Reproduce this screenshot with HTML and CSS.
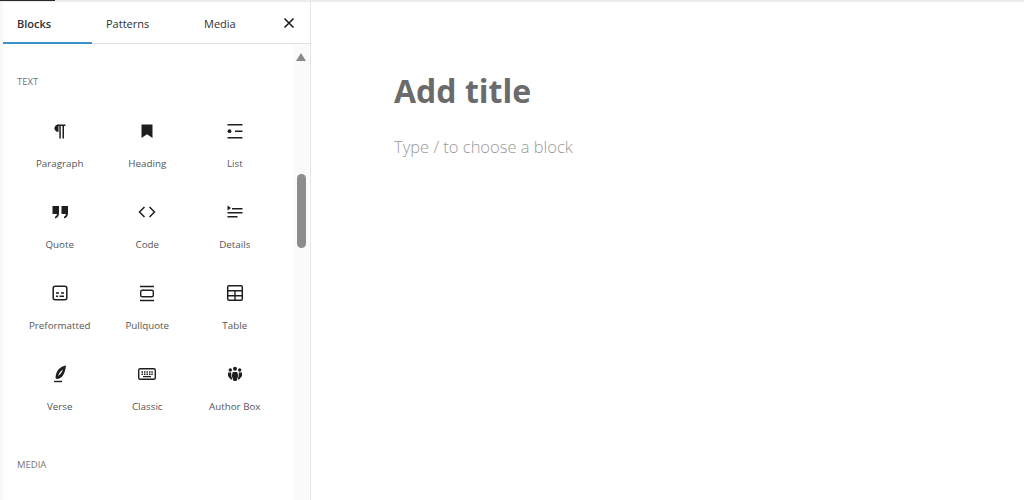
FILE: index.html
```html
<!DOCTYPE html>
<html lang="en">
<head>
  <meta charset="UTF-8">
  <title>Add title</title>
  <link rel="stylesheet" href="styles.css">
</head>
<body>
  <!-- Top bar edge -->
  <div class="top-edge"><div class="top-mark"></div></div>

  <div class="editor">
    <!-- Block inserter -->
    <aside class="inserter">
      <div class="tabs">
        <div class="tab active">Blocks</div>
        <div class="tab">Patterns</div>
        <div class="tab">Media</div>
        <button class="close-btn" aria-label="Close">
          <svg width="12" height="12" viewBox="0 0 12 12"><path d="M1.5 1.5l9 9M10.5 1.5l-9 9" stroke="#1e1e1e" stroke-width="1.6" fill="none"/></svg>
        </button>
      </div>
      <div class="inserter-body">
        <div class="block-list">
          <h2 class="group-title">Text</h2>
          <div class="block-grid">
            <div class="block-item">
              <svg class="block-icon" viewBox="0 0 24 24"><path d="M6.500 9.200C6.500 6.900 8.300 5.500 10.500 5.500v7.400C8.300 12.900 6.500 11.500 6.500 9.200z" fill="#1e1e1e"/><path d="M9.500 5.500H17.500V7H16v12.500h-1.500V7h-1.700v12.500h-1.500V7H9.500z" fill="#1e1e1e"/></svg>
              <span class="block-label">Paragraph</span>
            </div>
            <div class="block-item">
              <svg class="block-icon" viewBox="0 0 24 24"><path d="M6.500 5.500h11v13.500L12 15.200 6.500 19z" fill="#1e1e1e"/></svg>
              <span class="block-label">Heading</span>
            </div>
            <div class="block-item">
              <svg class="block-icon" viewBox="0 0 24 24"><path d="M4.500 5h15v1.400h-15zM12 11.500h7.500v1.400H12zM4.500 18h15v1.400h-15z" fill="#1e1e1e"/><circle cx="6.500" cy="12.200" r="1.900" fill="#1e1e1e"/></svg>
              <span class="block-label">List</span>
            </div>
            <div class="block-item">
              <svg class="block-icon" viewBox="0 0 24 24"><path d="M4.500 6h6.500v7c0 3-1.500 5-4 5.500v-1.800c1.200-.4 1.800-1.400 1.900-2.700H4.500zM13.500 6H20v7c0 3-1.500 5-4 5.500v-1.800c1.200-.4 1.800-1.400 1.900-2.700h-4.400z" fill="#1e1e1e"/></svg>
              <span class="block-label">Quote</span>
            </div>
            <div class="block-item">
              <svg class="block-icon" viewBox="0 0 24 24"><path d="M9.500 7L4.500 12l5 5M14.500 7l5 5-5 5" stroke="#1e1e1e" stroke-width="1.500" fill="none"/></svg>
              <span class="block-label">Code</span>
            </div>
            <div class="block-item">
              <svg class="block-icon" viewBox="0 0 24 24"><path d="M4.500 5.500l3.500 2.500-3.500 2.500z" fill="#1e1e1e"/><path d="M9 8h10.500v1.400H9zM4.500 12h15v1.400h-15zM4.500 16h10v1.400h-10z" fill="#1e1e1e"/></svg>
              <span class="block-label">Details</span>
            </div>
            <div class="block-item">
              <svg class="block-icon" viewBox="0 0 24 24"><rect x="5.200" y="5.200" width="13.600" height="13.600" rx="2" stroke="#1e1e1e" stroke-width="1.500" fill="none"/><path d="M8 11.300h3v1.400H8zM13 11.300h3v1.400h-3zM8 14.500h2v1.400H8zM11.500 14.500H16v1.400h-4.500z" fill="#1e1e1e"/></svg>
              <span class="block-label">Preformatted</span>
            </div>
            <div class="block-item">
              <svg class="block-icon" viewBox="0 0 24 24"><path d="M5 4.800h14v1.400H5zM5 18.800h14v1.400H5z" fill="#1e1e1e"/><rect x="5.700" y="9.200" width="12.600" height="6.600" rx="1.500" stroke="#1e1e1e" stroke-width="1.400" fill="none"/></svg>
              <span class="block-label">Pullquote</span>
            </div>
            <div class="block-item">
              <svg class="block-icon" viewBox="0 0 24 24"><rect x="4.700" y="4.700" width="14.600" height="14.600" rx="1.500" stroke="#1e1e1e" stroke-width="1.500" fill="none"/><path d="M4.700 9h14.600v1.400H4.700zM4.700 14h14.600v1.400H4.700zM11.300 9.500h1.400v9.500h-1.400z" fill="#1e1e1e"/></svg>
              <span class="block-label">Table</span>
            </div>
            <div class="block-item">
              <svg class="block-icon" viewBox="0 0 24 24"><path d="M18 3.500C12 4.500 8 8.500 7.500 16l1.200 1c5.300-.5 8.300-4.500 9.300-13.500zM10 14c1-3 2.800-5.200 5-6.500-1 2.800-2.800 5-5 6.500z" fill="#1e1e1e" fill-rule="evenodd"/><path d="M6 18.800h8v1.400H6z" fill="#1e1e1e"/></svg>
              <span class="block-label">Verse</span>
            </div>
            <div class="block-item">
              <svg class="block-icon" viewBox="0 0 24 24"><rect x="3.700" y="6.700" width="16.600" height="10.600" rx="1.500" stroke="#1e1e1e" stroke-width="1.400" fill="none"/><path d="M6.500 9.300h1.500v1.400H6.500zM9 9.300h1.500v1.400H9zM11.500 9.300H13v1.400h-1.500zM14 9.300h1.500v1.400H14zM16.300 9.300h1.500v1.400h-1.500zM6.500 11.600h1.500V13H6.500zM9 11.600h1.500V13H9zM11.500 11.600H13V13h-1.500zM14 11.600h1.500V13H14zM16.300 11.600h1.500V13h-1.500zM8 14h8v1.300H8z" fill="#1e1e1e"/></svg>
              <span class="block-label">Classic</span>
            </div>
            <div class="block-item">
              <svg class="block-icon" viewBox="0 0 24 24"><circle cx="12" cy="6.800" r="2" fill="#1e1e1e"/><circle cx="7.300" cy="8" r="1.700" fill="#1e1e1e"/><circle cx="16.700" cy="8" r="1.700" fill="#1e1e1e"/><path d="M9.800 10h4.400l1 3.800-1.700 5.200h-3l-1.700-5.200z" fill="#1e1e1e"/><path d="M5 10.500h3.200l.1 3.500 1 3.500H7.800L5 14zM19 10.500h-3.200l-.1 3.500-1 3.500h1.500L19 14z" fill="#1e1e1e"/></svg>
              <span class="block-label">Author Box</span>
            </div>
          </div>
          <h2 class="group-title">Media</h2>
        </div>
        <!-- Scrollbar -->
        <div class="scrollbar">
          <div class="scroll-arrow"></div>
          <div class="scroll-thumb"></div>
        </div>
      </div>
    </aside>

    <!-- Post canvas -->
    <main class="canvas">
      <h1 class="post-title">Add title</h1>
      <p class="post-hint">Type / to choose a block</p>
    </main>
  </div>
</body>
</html>
```

FILE: styles.css
```css
html, body {
  height: 100%;
}
body {
  margin: 0;
  background-color: #ffffff;
  color: #1e1e1e;
  font-family: 'Open Sans', 'Noto Sans', sans-serif;
  overflow: hidden;
}
.top-edge {
  height: 2px;
  background-color: #ececec;
}
.top-mark {
  width: 55px;
  height: 1px;
  background-color: #2b2b2b;
}
.editor {
  display: flex;
  height: 498px;
}
/* Inserter panel */
.inserter {
  width: 307px;
  margin-left: 3px;
  border-right: 1px solid #e4e4e4;
  box-shadow: -3px 0 0 #f8f8f8;
  display: flex;
  flex-direction: column;
  flex-shrink: 0;
}
.tabs {
  display: flex;
  height: 42px;
  border-bottom: 1px solid #e0e0e0;
  box-sizing: border-box;
}
.tab {
  width: 89px;
  padding-left: 14px;
  box-sizing: border-box;
  line-height: 43px;
  font-size: 11px;
  font-weight: 500;
  color: #2f2f2f;
}
.tab:nth-child(2) {
  width: 98px;
}
.tab:nth-child(3) {
  width: 79px;
  padding-left: 14px;
}
.tab.active {
  border-bottom: 2px solid #3a94c8;
  height: 42px;
  font-weight: 600;
}
.close-btn {
  border: none;
  background: none;
  padding: 0;
  width: 12px;
  height: 12px;
  margin: 15px 0 0 14px;
  display: flex;
}
.inserter-body {
  flex: 1;
  display: flex;
  min-height: 0;
}
.block-list {
  width: 290px;
  padding-left: 14px;
  box-sizing: border-box;
}
.group-title {
  margin: 32px 0 0;
  font-size: 9.500px;
  line-height: 12px;
  font-weight: 500;
  color: #757575;
  text-transform: uppercase;
}
.block-grid {
  display: grid;
  grid-template-columns: repeat(3, 87.500px);
  grid-auto-rows: 81px;
  margin: 31px 0 0 -1px;
}
.block-item {
  display: flex;
  flex-direction: column;
  align-items: center;
}
.block-icon {
  width: 24px;
  height: 24px;
}
.block-label {
  margin-top: 13px;
  font-size: 9.800px;
  line-height: 16px;
  color: #555555;
}
.block-grid + .group-title {
  margin-top: 16px;
}
/* Scrollbar */
.scrollbar {
  width: 16px;
  background-color: #fafafa;
  display: flex;
  flex-direction: column;
  align-items: center;
}
.scroll-arrow {
  width: 0;
  height: 0;
  margin-top: 9px;
  border-left: 5px solid transparent;
  border-right: 5px solid transparent;
  border-bottom: 8px solid #8a8a8a;
}
.scroll-thumb {
  width: 9px;
  height: 74px;
  margin-top: 113px;
  border-radius: 4.500px;
  background-color: #8c8c8c;
}
/* Post canvas */
.canvas {
  flex: 1;
  padding: 67px 0 0 83px;
}
.post-title {
  margin: 0;
  font-size: 32px;
  line-height: 44px;
  font-weight: 700;
  color: #6b6b6b;
}
.post-hint {
  margin: 22px 0 0;
  font-size: 16.500px;
  line-height: 24px;
  font-weight: 300;
  color: #999999;
}
```
